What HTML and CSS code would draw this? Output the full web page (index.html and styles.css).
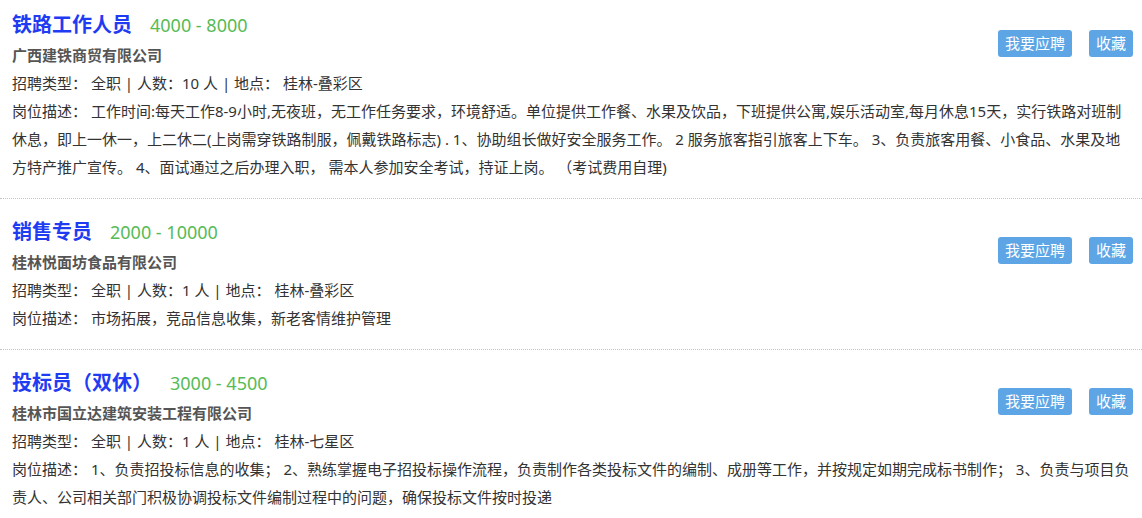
FILE: index.html
```html
<html>

<head>
	<meta charset="utf-8">
	<link rel="stylesheet" href="styles.css">
</head>

<body>
	<div class="job-list">
		<div class="job">
			<div class="actions">
				<button class="btn">我要应聘</button>
				<button class="btn">收藏</button>
			</div>
			<div class="job-title">铁路工作人员<span class="salary">4000 - 8000</span></div>
			<div class="company">广西建铁商贸有限公司</div>
			<div class="line">招聘类型： 全职 | 人数：10 人 | 地点： 桂林-叠彩区</div>
			<div class="line">岗位描述： 工作时间:每天工作8-9小时,无夜班，无工作任务要求，环境舒适。单位提供工作餐、水果及饮品，下班提供公寓,娱乐活动室,每月休息15天，实行铁路对班制休息，即上一休一，上二休二(上岗需穿铁路制服，佩戴铁路标志) . 1、协助组长做好安全服务工作。 2 服务旅客指引旅客上下车。 3、负责旅客用餐、小食品、水果及地方特产推广宣传。 4、面试通过之后办理入职， 需本人参加安全考试，持证上岗。 （考试费用自理)</div>
		</div>

		<div class="job">
			<div class="actions">
				<button class="btn">我要应聘</button>
				<button class="btn">收藏</button>
			</div>
			<div class="job-title">销售专员<span class="salary">2000 - 10000</span></div>
			<div class="company">桂林悦面坊食品有限公司</div>
			<div class="line">招聘类型： 全职 | 人数：1 人 | 地点： 桂林-叠彩区</div>
			<div class="line">岗位描述： 市场拓展，竞品信息收集，新老客情维护管理</div>
		</div>

		<div class="job">
			<div class="actions">
				<button class="btn">我要应聘</button>
				<button class="btn">收藏</button>
			</div>
			<div class="job-title">投标员（双休）<span class="salary">3000 - 4500</span></div>
			<div class="company">桂林市国立达建筑安装工程有限公司</div>
			<div class="line">招聘类型： 全职 | 人数：1 人 | 地点： 桂林-七星区</div>
			<div class="line">岗位描述： 1、负责招投标信息的收集； 2、熟练掌握电子招投标操作流程，负责制作各类投标文件的编制、成册等工作，并按规定如期完成标书制作； 3、负责与项目负责人、公司相关部门积极协调投标文件编制过程中的问题，确保投标文件按时投递</div>
		</div>
	</div>
</body>

</html>
```

FILE: styles.css
```css
:root {
	--title-blue: #1f3cf2;
	--salary-green: #56bb56;
	--btn-blue: #5da5e4;
	--text: #333333;
	--muted: #555555;
}

body {
	margin: 0;
	background: #ffffff;
	color: var(--text);
	font-family: "Noto Sans", "Noto Sans CJK SC", sans-serif;
	font-size: 15px;
}

.job {
	padding: 17px 9px 17px 12px;
	border-bottom: 1px dotted #c4c4c4;
}

.job:first-child {
	padding-top: 9px;
}

.job:last-child {
	border-bottom: none;
}

.actions {
	float: right;
	display: flex;
	gap: 17px;
	margin-top: 21px;
}

.btn {
	height: 27px;
	padding: 0 7px;
	border: none;
	border-radius: 3px;
	background: var(--btn-blue);
	color: #ffffff;
	font-family: inherit;
	font-size: 15px;
	line-height: 27px;
	cursor: pointer;
}

.job-title {
	font-size: 20px;
	font-weight: bold;
	line-height: 31px;
	color: var(--title-blue);
}

.salary {
	margin-left: 18px;
	font-size: 18px;
	font-weight: normal;
	color: var(--salary-green);
}

.company {
	font-weight: bold;
	line-height: 28px;
	color: var(--muted);
}

.line {
	line-height: 28px;
}
```
